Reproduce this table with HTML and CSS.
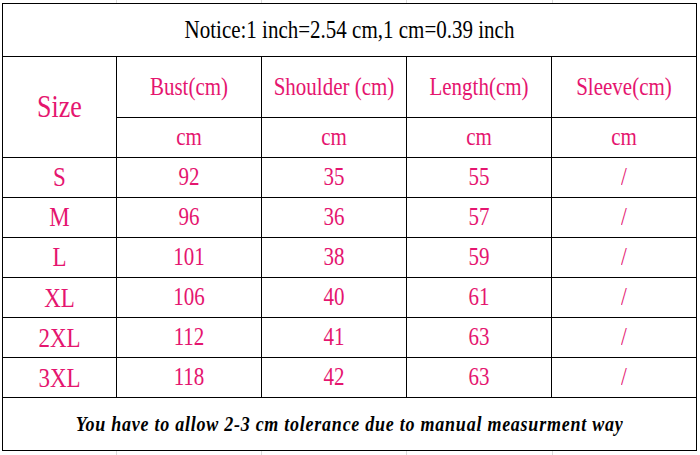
FILE: index.html
```html
<!DOCTYPE html>
<html lang="en">
<head>
    <meta charset="UTF-8">
    <meta name="viewport" content="width=device-width, initial-scale=1.0">
    <title>Size Chart</title>
    <link rel="stylesheet" href="styles.css">
</head>
<body>
    <table class="size-chart">
        <colgroup>
            <col class="col-size">
            <col class="col-data">
            <col class="col-data">
            <col class="col-data">
            <col class="col-data">
        </colgroup>
        <tr class="row-notice">
            <td colspan="5" class="notice"><span>Notice:1 inch=2.54 cm,1 cm=0.39 inch</span></td>
        </tr>
        <tr class="row-head">
            <td rowspan="2" class="size-head"><span>Size</span></td>
            <td><span>Bust(cm)</span></td>
            <td><span>Shoulder (cm)</span></td>
            <td><span>Length(cm)</span></td>
            <td><span>Sleeve(cm)</span></td>
        </tr>
        <tr class="row-unit">
            <td><span>cm</span></td><td><span>cm</span></td><td><span>cm</span></td><td><span>cm</span></td>
        </tr>
        <tr class="row"><td class="size"><span>S</span></td><td><span>92</span></td><td><span>35</span></td><td><span>55</span></td><td><span>/</span></td></tr>
        <tr class="row"><td class="size"><span>M</span></td><td><span>96</span></td><td><span>36</span></td><td><span>57</span></td><td><span>/</span></td></tr>
        <tr class="row"><td class="size"><span>L</span></td><td><span>101</span></td><td><span>38</span></td><td><span>59</span></td><td><span>/</span></td></tr>
        <tr class="row"><td class="size"><span>XL</span></td><td><span>106</span></td><td><span>40</span></td><td><span>61</span></td><td><span>/</span></td></tr>
        <tr class="row"><td class="size"><span>2XL</span></td><td><span>112</span></td><td><span>41</span></td><td><span>63</span></td><td><span>/</span></td></tr>
        <tr class="row"><td class="size"><span>3XL</span></td><td><span>118</span></td><td><span>42</span></td><td><span>63</span></td><td><span>/</span></td></tr>
        <tr class="row-foot">
            <td colspan="5" class="foot"><span>You have to allow 2-3 cm tolerance due to manual measurment way</span></td>
        </tr>
    </table>
</body>
</html>
```

FILE: styles.css
```css
body {
    margin: 0;
    padding: 3px 0 0 2px;
    background-color: #fff;
    background-image:
        linear-gradient(#dcdcdc, #dcdcdc),
        linear-gradient(#dcdcdc, #dcdcdc),
        linear-gradient(#dcdcdc, #dcdcdc),
        linear-gradient(#dcdcdc, #dcdcdc);
    background-size: 1px 100%;
    background-position: 116px 0, 261px 0, 406px 0, 552px 0;
    background-repeat: no-repeat;
    height: 455px;
    box-sizing: border-box;
    font-family: "Liberation Serif", "Times New Roman", serif;
    color: #e5156f;
}
.size-chart {
    border-collapse: collapse;
    table-layout: fixed;
    width: 695px;
    background: #fff;
}
.col-size {
    width: 114px;
}
.col-data {
    width: 145px;
}
td {
    border: 1px solid #000;
    padding: 0;
    text-align: center;
    font-size: 21px;
    line-height: 1;
}
/* the source picture is a little stretched in height */
td span {
    display: inline-block;
    transform: scaleY(1.2);
}
.row-notice {
    height: 53px;
}
.notice {
    color: #000;
    font-size: 21px;
}
.row-head {
    height: 61px;
}
.row-unit {
    height: 40px;
}
.row {
    height: 40px;
}
.size-head {
    font-size: 26px;
}
.size {
    font-size: 23px;
}
.row-foot {
    height: 53px;
}
.foot {
    color: #000;
    font-size: 18px;
    font-weight: bold;
    font-style: italic;
    letter-spacing: 0.75px;
}
```
